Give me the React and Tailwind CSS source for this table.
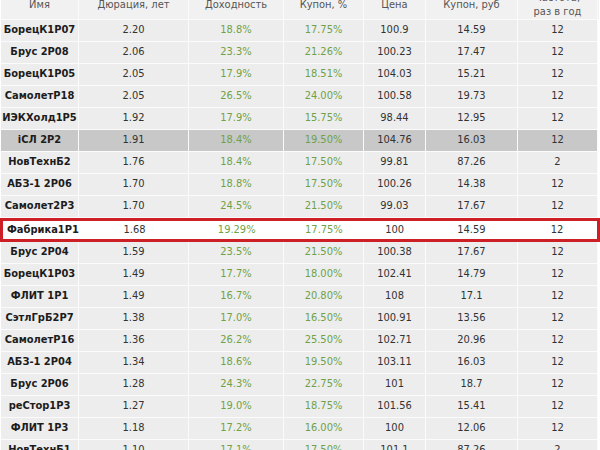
import React from 'react';

const cols = [
  { key: 'name', w: 'w-[78px]' },
  { key: 'dur', w: 'w-[110px]' },
  { key: 'yld', w: 'w-[95px]' },
  { key: 'cpn', w: 'w-[80px]' },
  { key: 'price', w: 'w-[62px]' },
  { key: 'cpnRub', w: 'w-[92px]' },
  { key: 'freq', w: 'w-[80px]' },
];

const rows = [
  ['БорецК1Р07', '2.20', '18.8%', '17.75%', '100.9', '14.59', '12'],
  ['Брус 2Р08', '2.06', '23.3%', '21.26%', '100.23', '17.47', '12'],
  ['БорецК1Р05', '2.05', '17.9%', '18.51%', '104.03', '15.21', '12'],
  ['СамолетР18', '2.05', '26.5%', '24.00%', '100.58', '19.73', '12'],
  ['ИЭКХолд1Р5', '1.92', '17.9%', '15.75%', '98.44', '12.95', '12'],
  ['iСЛ 2Р2', '1.91', '18.4%', '19.50%', '104.76', '16.03', '12', 'grey'],
  ['НовТехнБ2', '1.76', '18.4%', '17.50%', '99.81', '87.26', '2'],
  ['АБЗ-1 2Р06', '1.70', '18.8%', '17.50%', '100.26', '14.38', '12'],
  ['Самолет2Р3', '1.70', '24.5%', '21.50%', '99.03', '17.67', '12'],
  ['Фабрика1Р1', '1.68', '19.29%', '17.75%', '100', '14.59', '12', 'hl'],
  ['Брус 2Р04', '1.59', '23.5%', '21.50%', '100.38', '17.67', '12'],
  ['БорецК1Р03', '1.49', '17.7%', '18.00%', '102.41', '14.79', '12'],
  ['ФЛИТ 1Р1', '1.49', '16.7%', '20.80%', '108', '17.1', '12'],
  ['СэтлГрБ2Р7', '1.38', '17.0%', '16.50%', '100.91', '13.56', '12'],
  ['СамолетР16', '1.36', '26.2%', '25.50%', '102.71', '20.96', '12'],
  ['АБЗ-1 2Р04', '1.34', '18.6%', '19.50%', '103.11', '16.03', '12'],
  ['Брус 2Р06', '1.28', '24.3%', '22.75%', '101', '18.7', '12'],
  ['реСтор1Р3', '1.27', '19.0%', '18.75%', '101.56', '15.41', '12'],
  ['ФЛИТ 1Р3', '1.18', '17.2%', '16.00%', '100', '12.06', '12'],
  ['НовТехнБ1', '1.10', '17.1%', '17.50%', '101.1', '87.26', '2'],
];

const headers = ['Имя', 'Дюрация, лет', 'Доходность', 'Купон, %', 'Цена', 'Купон, руб'];

const cellText = (i) => {
  if (i === 0) return 'font-bold text-[#1c1c1c]';
  if (i === 2 || i === 3) return 'text-[#6fa247]';
  return 'text-[#333333]';
};

const Row = ({ row }) => {
  const kind = row[7];
  if (kind === 'hl') {
    return (
      <div className="flex h-[24px] border-[3px] border-[#cc1f26] bg-white -mx-[1px]">
        {cols.map((c, i) => (
          <div
            key={c.key}
            className={`${i === 0 ? 'w-[77px] justify-start pl-[4px]' : c.w + ' justify-center'} flex items-center ${cellText(i)}`}
          >
            {row[i]}
          </div>
        ))}
      </div>
    );
  }
  const bg = kind === 'grey' ? 'bg-[#c8c8c8]' : 'bg-[#ededed]';
  return (
    <div className="flex h-[22px] border-b border-[#fbfbfb]">
      {cols.map((c, i) => (
        <div
          key={c.key}
          className={`${c.w} ${bg} flex items-center justify-center border-r border-[#fbfbfb] ${cellText(i)}`}
        >
          {row[i]}
        </div>
      ))}
    </div>
  );
};

export default function App() {
  return (
    <div
      className="w-[600px] h-[450px] overflow-hidden bg-white text-[11px]"
      style={{ fontFamily: '"DejaVu Sans Condensed", "DejaVu Sans", sans-serif' }}
    >
      <div className="w-[598px] ml-[1px]">
        <div className="flex h-[30px] -mt-[10px] bg-[#f1f1f1] border-b border-[#fbfbfb]">
          {cols.map((c, i) => (
            <div
              key={c.key}
              className={`${c.w} flex items-center justify-center text-center leading-[14px] text-[#555555] border-r border-[#fbfbfb]`}
            >
              {i === 6 ? (
                <span>
                  Частота,
                  <br />
                  раз в год
                </span>
              ) : (
                headers[i]
              )}
            </div>
          ))}
        </div>
        {rows.map((r) => (
          <Row key={r[0] + r[1]} row={r} />
        ))}
      </div>
    </div>
  );
}
